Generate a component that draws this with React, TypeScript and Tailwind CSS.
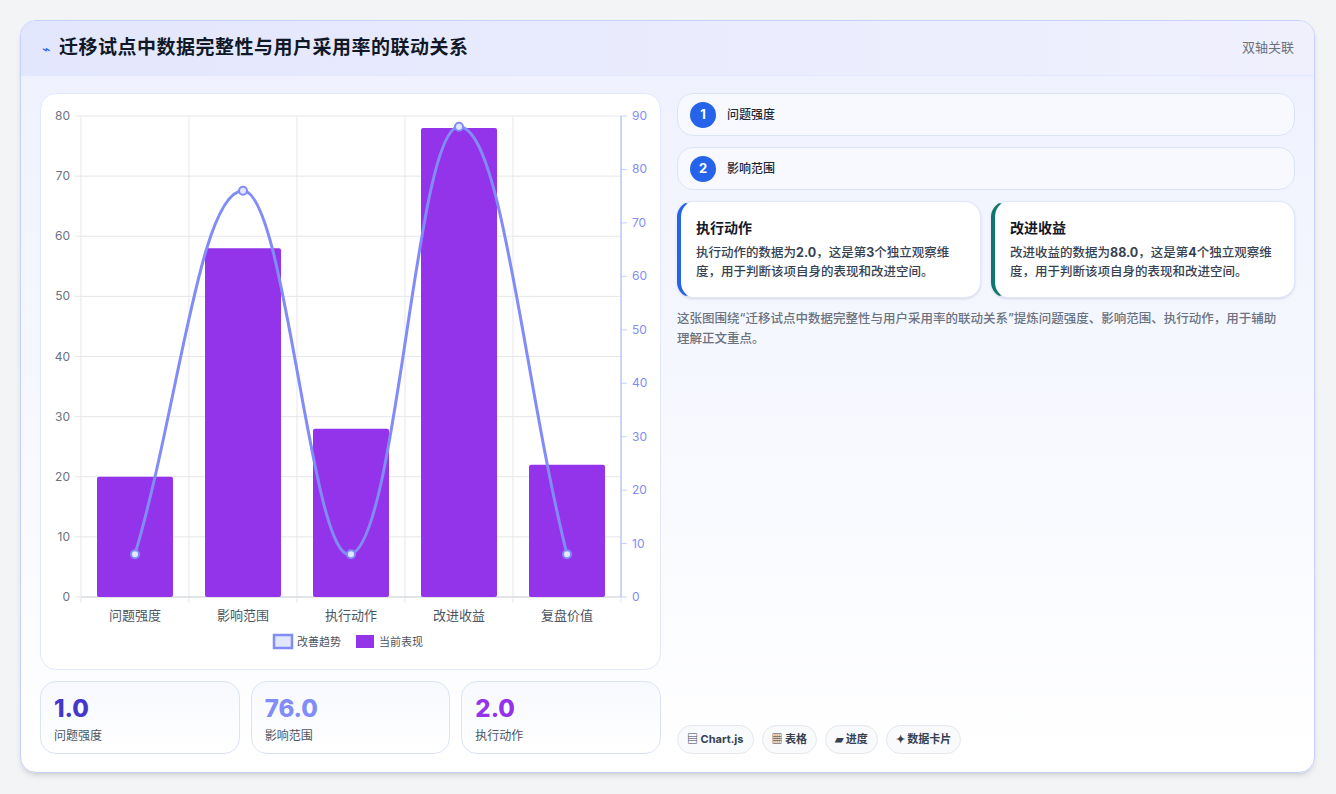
import React from 'react';

const labels = ['问题强度', '影响范围', '执行动作', '改进收益', '复盘价值'];
const bars = [20, 58, 28, 78, 22];
const line = [8, 76, 8, 88, 8];

const X0 = 80;
const X1 = 620;
const Y0 = 596;
const Y1 = 115;
const step = (X1 - X0) / 5;
const yl = (v: number) => Y0 - (v / 80) * (Y0 - Y1);
const yr = (v: number) => Y0 - (v / 90) * (Y0 - Y1);

// chart.js style spline, tension 0.4
const buildPath = () => {
  const pts = line.map((v, i) => ({ x: X0 + step * (i + 0.5), y: yr(v) }));
  const cps = pts.map((cur, i) => {
    const prev = pts[i - 1] || cur;
    const next = pts[i + 1] || cur;
    const d01 = Math.hypot(cur.x - prev.x, cur.y - prev.y);
    const d12 = Math.hypot(next.x - cur.x, next.y - cur.y);
    const tot = d01 + d12 || 1;
    const fa = 0.4 * (d01 / tot);
    const fb = 0.4 * (d12 / tot);
    return {
      p: { x: cur.x - fa * (next.x - prev.x), y: cur.y - fa * (next.y - prev.y) },
      n: { x: cur.x + fb * (next.x - prev.x), y: cur.y + fb * (next.y - prev.y) },
    };
  });
  let d = `M${pts[0].x},${pts[0].y}`;
  for (let i = 1; i < pts.length; i++) {
    d += ` C${cps[i - 1].n.x},${cps[i - 1].n.y} ${cps[i].p.x},${cps[i].p.y} ${pts[i].x},${pts[i].y}`;
  }
  return { d, pts };
};

const Chart: React.FC = () => {
  const { d, pts } = buildPath();
  return (
    <svg viewBox="40 93 620 576" width={620} height={576} className="block" style={{ fontFamily: 'Inter, "Noto Sans CJK SC", sans-serif' }}>
      {[0, 10, 20, 30, 40, 50, 60, 70, 80].map((v) => (
        <g key={v}>
          <line x1={74} x2={X1} y1={yl(v)} y2={yl(v)} stroke="#e5e7eb" strokeWidth={1} />
          <text x={69} y={yl(v) + 4} textAnchor="end" fontSize={12} fill="#6b7280">{v}</text>
        </g>
      ))}
      {[0, 10, 20, 30, 40, 50, 60, 70, 80, 90].map((v) => (
        <g key={v}>
          <line x1={X1} x2={626} y1={yr(v)} y2={yr(v)} stroke="#c7d2fe" strokeWidth={1} />
          <text x={631} y={yr(v) + 4} fontSize={12} fill="#818cf8">{v}</text>
        </g>
      ))}
      {[0, 1, 2, 3, 4, 5].map((i) => (
        <line key={i} x1={X0 + step * i} x2={X0 + step * i} y1={Y1} y2={Y0 + 6} stroke="#e5e7eb" strokeWidth={1} />
      ))}
      <line x1={X0} x2={X1} y1={Y0} y2={Y0} stroke="#d1d5db" />
      <line x1={X1} x2={X1} y1={Y1} y2={Y0} stroke="#a5b4fc" />
      {bars.map((v, i) => (
        <rect key={i} x={X0 + step * i + 16} y={yl(v)} width={step - 32} height={Y0 - yl(v)} rx={2} fill="#9333ea" />
      ))}
      <path d={d} fill="none" stroke="#818cf8" strokeWidth={3} />
      {pts.map((p, i) => (
        <circle key={i} cx={p.x} cy={p.y} r={4} fill="#e0e7ff" stroke="#818cf8" strokeWidth={2} />
      ))}
      {labels.map((l, i) => (
        <text key={l} x={X0 + step * (i + 0.5)} y={619} textAnchor="middle" fontSize={13} fill="#4b5563">{l}</text>
      ))}
      <rect x={273} y={634} width={18} height={13} fill="#e0e7ff" stroke="#818cf8" strokeWidth={2.5} />
      <text x={296} y={645} fontSize={11} fill="#4b5563">改善趋势</text>
      <rect x={355} y={634} width={18} height={13} fill="#9333ea" />
      <text x={378} y={645} fontSize={11} fill="#4b5563">当前表现</text>
    </svg>
  );
};

const App: React.FC = () => {
  return (
    <div className="w-[1336px] h-[794px] bg-[#f3f4f6] pt-[20px] pl-[20px]" style={{ fontFamily: 'Inter, "Noto Sans CJK SC", sans-serif' }}>
      <div className="w-[1295px] h-[753px] rounded-2xl border border-[#c7d2fe] bg-gradient-to-b from-[#eef1fe] to-white shadow-md overflow-hidden flex flex-col">
        {/* Header */}
        <div className="h-[55px] shrink-0 flex items-center justify-between pl-[21px] pr-[20px] bg-gradient-to-r from-[#e3e7fd] to-[#f0f0fd] border-b border-[#e0e7ff]">
          <div className="flex items-center gap-[9px]">
            <span className="text-[14px] text-[#2563eb]">⌁</span>
            <h1 className="text-[19px] font-bold text-[#111827] tracking-[0.5px]">迁移试点中数据完整性与用户采用率的联动关系</h1>
          </div>
          <span className="text-[13px] text-[#6b7280]">双轴关联</span>
        </div>

        {/* Body */}
        <div className="flex-1 flex gap-[16px] px-[19px] pt-[17px] pb-[19px]">
          <div className="w-[621px] flex flex-col gap-[11px]">
            <div className="rounded-2xl border border-[#e0e7ff] bg-white overflow-hidden h-[577px]">
              <Chart />
            </div>
            <div className="grid grid-cols-3 gap-[11px]">
              {[
                ['1.0', '问题强度', 'text-[#4338ca]'],
                ['76.0', '影响范围', 'text-[#818cf8]'],
                ['2.0', '执行动作', 'text-[#9333ea]'],
              ].map(([v, l, c]) => (
                <div key={l} className="h-[73px] rounded-2xl border border-[#dbe4f5] bg-gradient-to-b from-[#f7f9fe] to-white px-[13px] pt-[12px]">
                  <div className={`text-[24px] font-extrabold leading-[30px] ${c}`}>{v}</div>
                  <div className="text-[12px] text-[#4b5563] mt-[3px]">{l}</div>
                </div>
              ))}
            </div>
          </div>

          <div className="flex-1 flex flex-col">
            {['问题强度', '影响范围'].map((t, i) => (
              <div key={t} className="h-[43px] mb-[11px] rounded-2xl border border-[#dbe4f5] bg-[#f7f9fe] flex items-center px-[12px] gap-[11px]">
                <span className="w-[26px] h-[26px] rounded-full bg-[#2563eb] text-white text-[13px] font-bold flex items-center justify-center">{i + 1}</span>
                <span className="text-[12px] text-[#1f2937] font-medium">{t}</span>
              </div>
            ))}
            <div className="grid grid-cols-2 gap-[10px]">
              {[
                ['执行动作', '2.0', '3', 'border-l-[#2563eb]'],
                ['改进收益', '88.0', '4', 'border-l-[#0f766e]'],
              ].map(([t, v, n, b]) => (
                <div key={t} className={`h-[97px] rounded-2xl bg-white border border-[#e0e7ff] border-l-4 ${b} shadow-sm pl-[15px] pr-[12px] pt-[15px]`}>
                  <div className="text-[14px] font-bold text-[#111827]">{t}</div>
                  <p className="mt-[5px] text-[12.5px] leading-[19px] text-[#374151] font-medium">
                    {t}的数据为<b>{v}</b>，这是第<b>{n}</b>个独立观察维度，用于判断该项自身的表现和改进空间。
                  </p>
                </div>
              ))}
            </div>
            <p className="mt-[11px] text-[12.5px] leading-[20px] text-[#6b7280] font-medium pr-[8px]">
              这张图围绕“迁移试点中数据完整性与用户采用率的联动关系”提炼问题强度、影响范围、执行动作，用于辅助理解正文重点。
            </p>
            <div className="mt-auto flex gap-[8px]">
              {['▤ Chart.js', '▦ 表格', '▰ 进度', '✦ 数据卡片'].map((t) => (
                <span key={t} className="h-[29px] px-[9px] rounded-full border border-[#e5e7eb] bg-[#f8fafc] text-[11px] font-bold text-[#374151] flex items-center">{t}</span>
              ))}
            </div>
          </div>
        </div>
      </div>
    </div>
  );
};

export default App;
